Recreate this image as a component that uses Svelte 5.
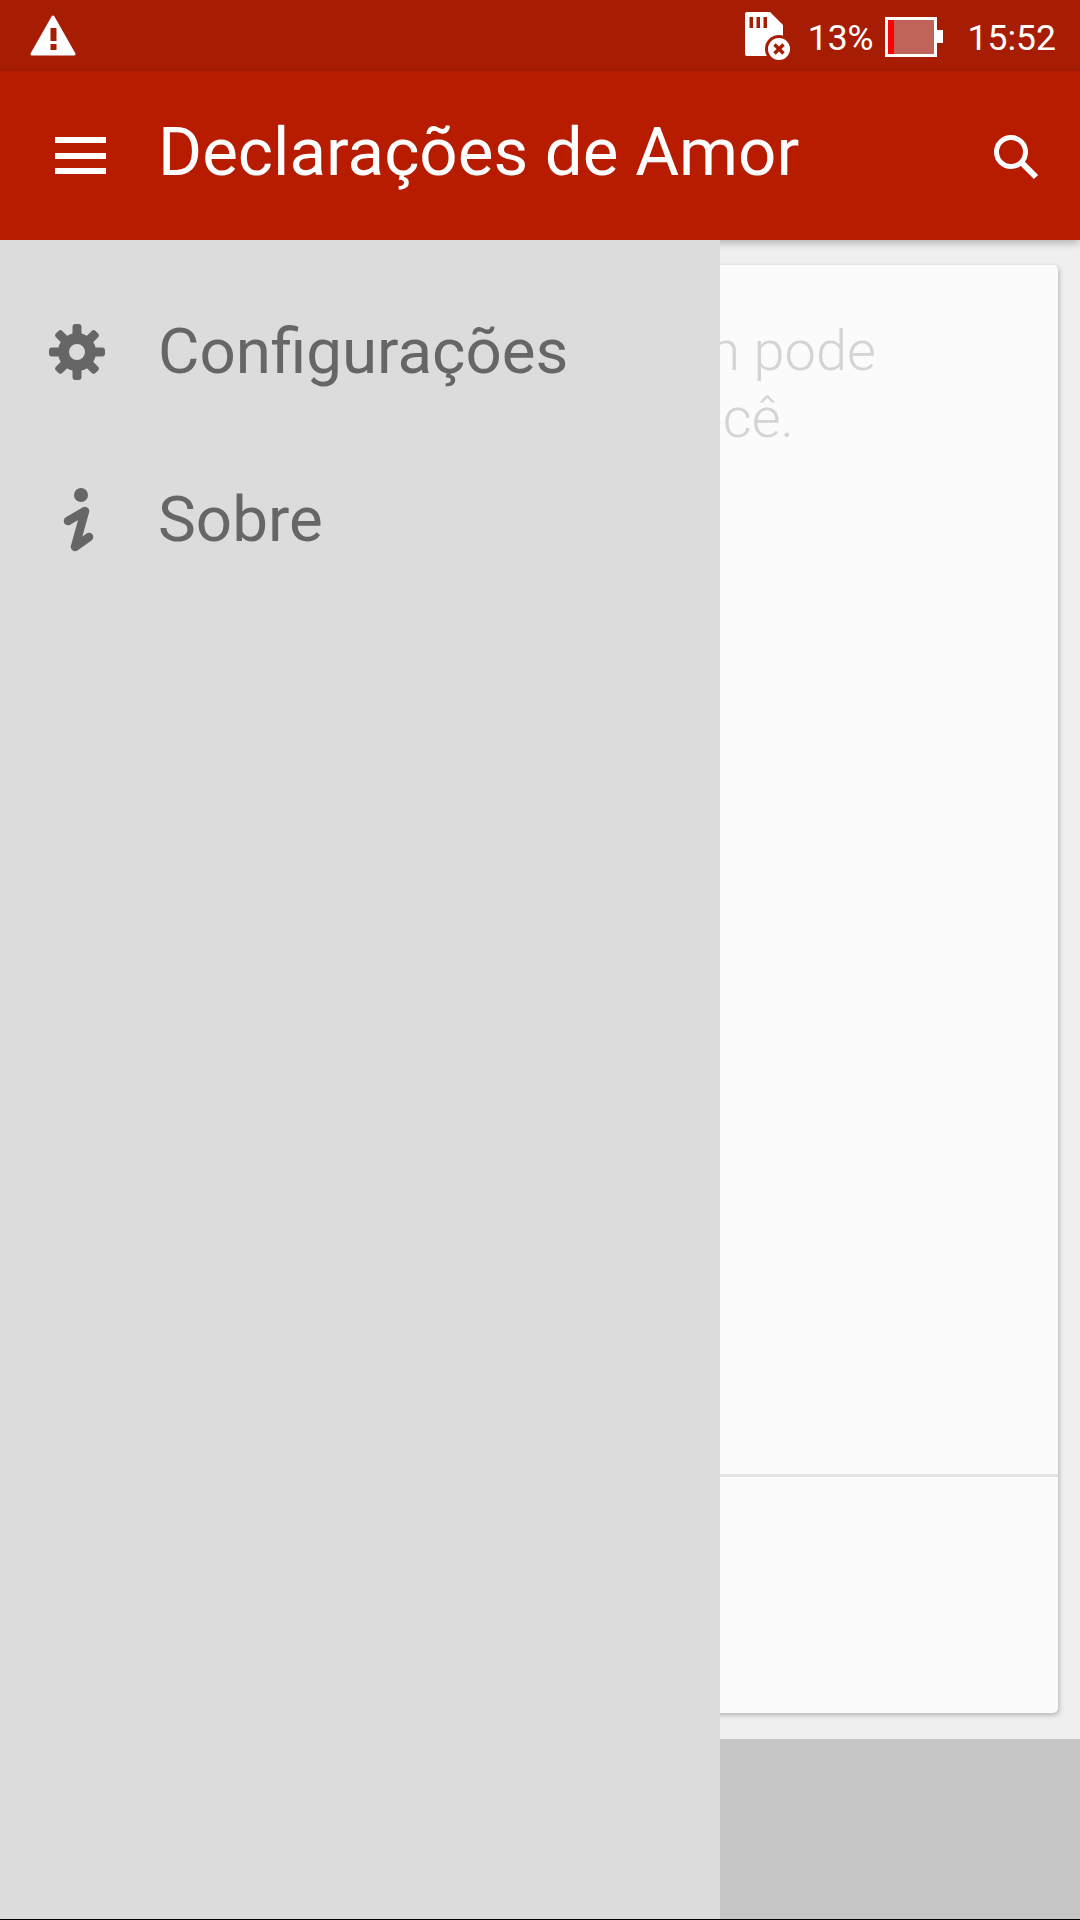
<script lang="ts">
	const menu = [
		{ id: 'settings', label: 'Configurações' },
		{ id: 'about', label: 'Sobre' }
	];
	const teeth = [0, 45, 90, 135, 180, 225, 270, 315];
</script>

<div class="screen">
	<header class="status">
		<svg class="warn" width="46" height="42" viewBox="0 0 46 42">
			<path d="M23 2 L44 39 H2 Z" fill="#fff" stroke="#fff" stroke-width="3" stroke-linejoin="round" />
			<rect x="20.5" y="13" width="6" height="13" fill="#a71d04" />
			<rect x="20.5" y="29" width="6" height="6" fill="#a71d04" />
		</svg>
		<div class="status-right">
			<svg class="sd" width="50" height="50" viewBox="0 0 50 50">
				<path d="M3 1 H26 L39 14 V43 Q39 45 37 45 H3 Q1 45 1 43 V3 Q1 1 3 1 Z" fill="#fff" />
				<rect x="5.5" y="6" width="3.5" height="11" fill="#a71d04" />
				<rect x="12.5" y="6" width="3.5" height="11" fill="#a71d04" />
				<rect x="19.5" y="6" width="3.5" height="11" fill="#a71d04" />
				<circle cx="35" cy="38" r="14" fill="#a71d04" />
				<circle cx="35" cy="38" r="11" fill="#fff" />
				<path d="M30.5 33.5 L39.5 42.5 M39.5 33.5 L30.5 42.5" stroke="#a71d04" stroke-width="3.5" />
			</svg>
			<span class="pct">13%</span>
			<div class="battery">
				<div class="battery-body"><div class="battery-level"></div></div>
				<div class="battery-nub"></div>
			</div>
			<span class="clock">15:52</span>
		</div>
	</header>

	<div class="toolbar">
		<button class="menu-btn" aria-label="Menu">
			<span></span><span></span><span></span>
		</button>
		<h1>Declarações de Amor</h1>
		<svg class="search" width="50" height="50" viewBox="0 0 50 50">
			<circle cx="20" cy="20" r="14.5" fill="none" stroke="#fff" stroke-width="5" />
			<path d="M31 31 L45 45" stroke="#fff" stroke-width="6" />
		</svg>
	</div>

	<main class="content">
		<section class="card">
			<div class="card-text">
				<p class="line-one">alguém pode</p>
				<p class="line-two">você.</p>
			</div>
			<div class="card-footer"></div>
		</section>
	</main>
	<div class="nav-bar"></div>

	<nav class="drawer">
		{#each menu as item (item.id)}
			<div class="drawer-item">
				<span class="drawer-icon">
					{#if item.id === 'settings'}
						<svg width="58" height="58" viewBox="0 0 58 58">
							<g fill="#666">
								{#each teeth as deg}
									<rect x="24.5" y="1" width="9" height="14" rx="3" transform="rotate({deg} 29 29)" />
								{/each}
							</g>
							<circle cx="29" cy="29" r="13.5" fill="none" stroke="#666" stroke-width="11" />
						</svg>
					{:else}
						<svg width="58" height="70" viewBox="0 0 58 70">
							<circle cx="33" cy="10" r="7" fill="#666" />
							<path d="M20 36 L37 26 L27 62 L41 52" fill="none" stroke="#666" stroke-width="8.5" stroke-linecap="round" stroke-linejoin="round" />
						</svg>
					{/if}
				</span>
				<span class="drawer-label">{item.label}</span>
			</div>
		{/each}
	</nav>
	<div class="edge"></div>
</div>

<style>
	:global(body) {
		margin: 0;
	}

	.screen {
		position: relative;
		width: 1080px;
		height: 1920px;
		display: flex;
		flex-direction: column;
		overflow: hidden;
		font-family: Roboto, 'Noto Sans', sans-serif;
		background: #efefef;
	}

	.status {
		height: 71px;
		flex: none;
		background: #a71d04;
		display: flex;
		align-items: center;
		justify-content: space-between;
		padding: 0 24px 0 30px;
		color: #fff;
		box-sizing: border-box;
	}

	.status-right {
		display: flex;
		align-items: center;
		font-size: 35.5px;
		padding-top: 5px;
	}

	.sd {
		margin-right: 14px;
		margin-top: -4px;
	}

	.pct {
		margin-right: 11px;
	}

	.battery {
		display: flex;
		align-items: center;
		margin-right: 25px;
		margin-top: -3px;
	}

	.battery-body {
		width: 52px;
		height: 40px;
		box-sizing: border-box;
		border: 3px solid #fff;
		background: #c0635a;
	}

	.battery-level {
		width: 6px;
		height: 100%;
		background: #f00;
	}

	.battery-nub {
		width: 6px;
		height: 13px;
		background: #fff;
	}

	.toolbar {
		height: 169px;
		flex: none;
		background: #b71c00;
		display: flex;
		align-items: center;
		color: #fff;
		box-shadow: 0 3px 8px rgba(0, 0, 0, 0.25);
		position: relative;
		z-index: 1;
	}

	.menu-btn {
		width: 51px;
		height: 37px;
		margin-left: 55px;
		padding: 0;
		border: none;
		background: none;
		display: flex;
		flex-direction: column;
		justify-content: space-between;
	}

	.menu-btn span {
		display: block;
		height: 6px;
		background: #fff;
	}

	h1 {
		margin: 0 0 8px 52px;
		font-size: 67.3px;
		font-weight: 400;
		flex: 1;
	}

	.search {
		margin-right: 39px;
		margin-top: 2px;
	}

	.content {
		flex: 1;
		padding: 25px 22px 26px 24px;
		display: flex;
		min-height: 0;
	}

	.card {
		flex: 1;
		background: #fbfbfb;
		border-radius: 5px;
		box-shadow: 1px 2px 5px rgba(0, 0, 0, 0.25);
		display: flex;
		flex-direction: column;
	}

	.card-text {
		flex: 1;
		padding-top: 53px;
		text-align: right;
		font-size: 56px;
		line-height: 67px;
		font-weight: 300;
		color: #d4d4d4;
	}

	.card-text p {
		margin: 0;
	}

	.line-one {
		padding-right: 182px;
	}

	.line-two {
		padding-right: 264px;
	}

	.card-footer {
		height: 236px;
		border-top: 3px solid #e3e3e3;
	}

	.nav-bar {
		height: 181px;
		flex: none;
		background: #c6c6c6;
	}

	.drawer {
		position: absolute;
		top: 240px;
		left: 0;
		bottom: 0;
		width: 720px;
		background: #dcdcdc;
		padding-top: 27px;
		box-sizing: border-box;
		z-index: 2;
	}

	.drawer-item {
		height: 168px;
		display: flex;
		align-items: center;
		color: #666;
	}

	.drawer-icon {
		width: 158px;
		padding: 2px 0 0 48px;
		box-sizing: border-box;
		display: flex;
		flex: none;
	}

	.drawer-label {
		font-size: 63.7px;
	}

	.edge {
		position: absolute;
		left: 0;
		right: 0;
		bottom: 0;
		height: 1px;
		background: #000;
		z-index: 3;
	}
</style>
